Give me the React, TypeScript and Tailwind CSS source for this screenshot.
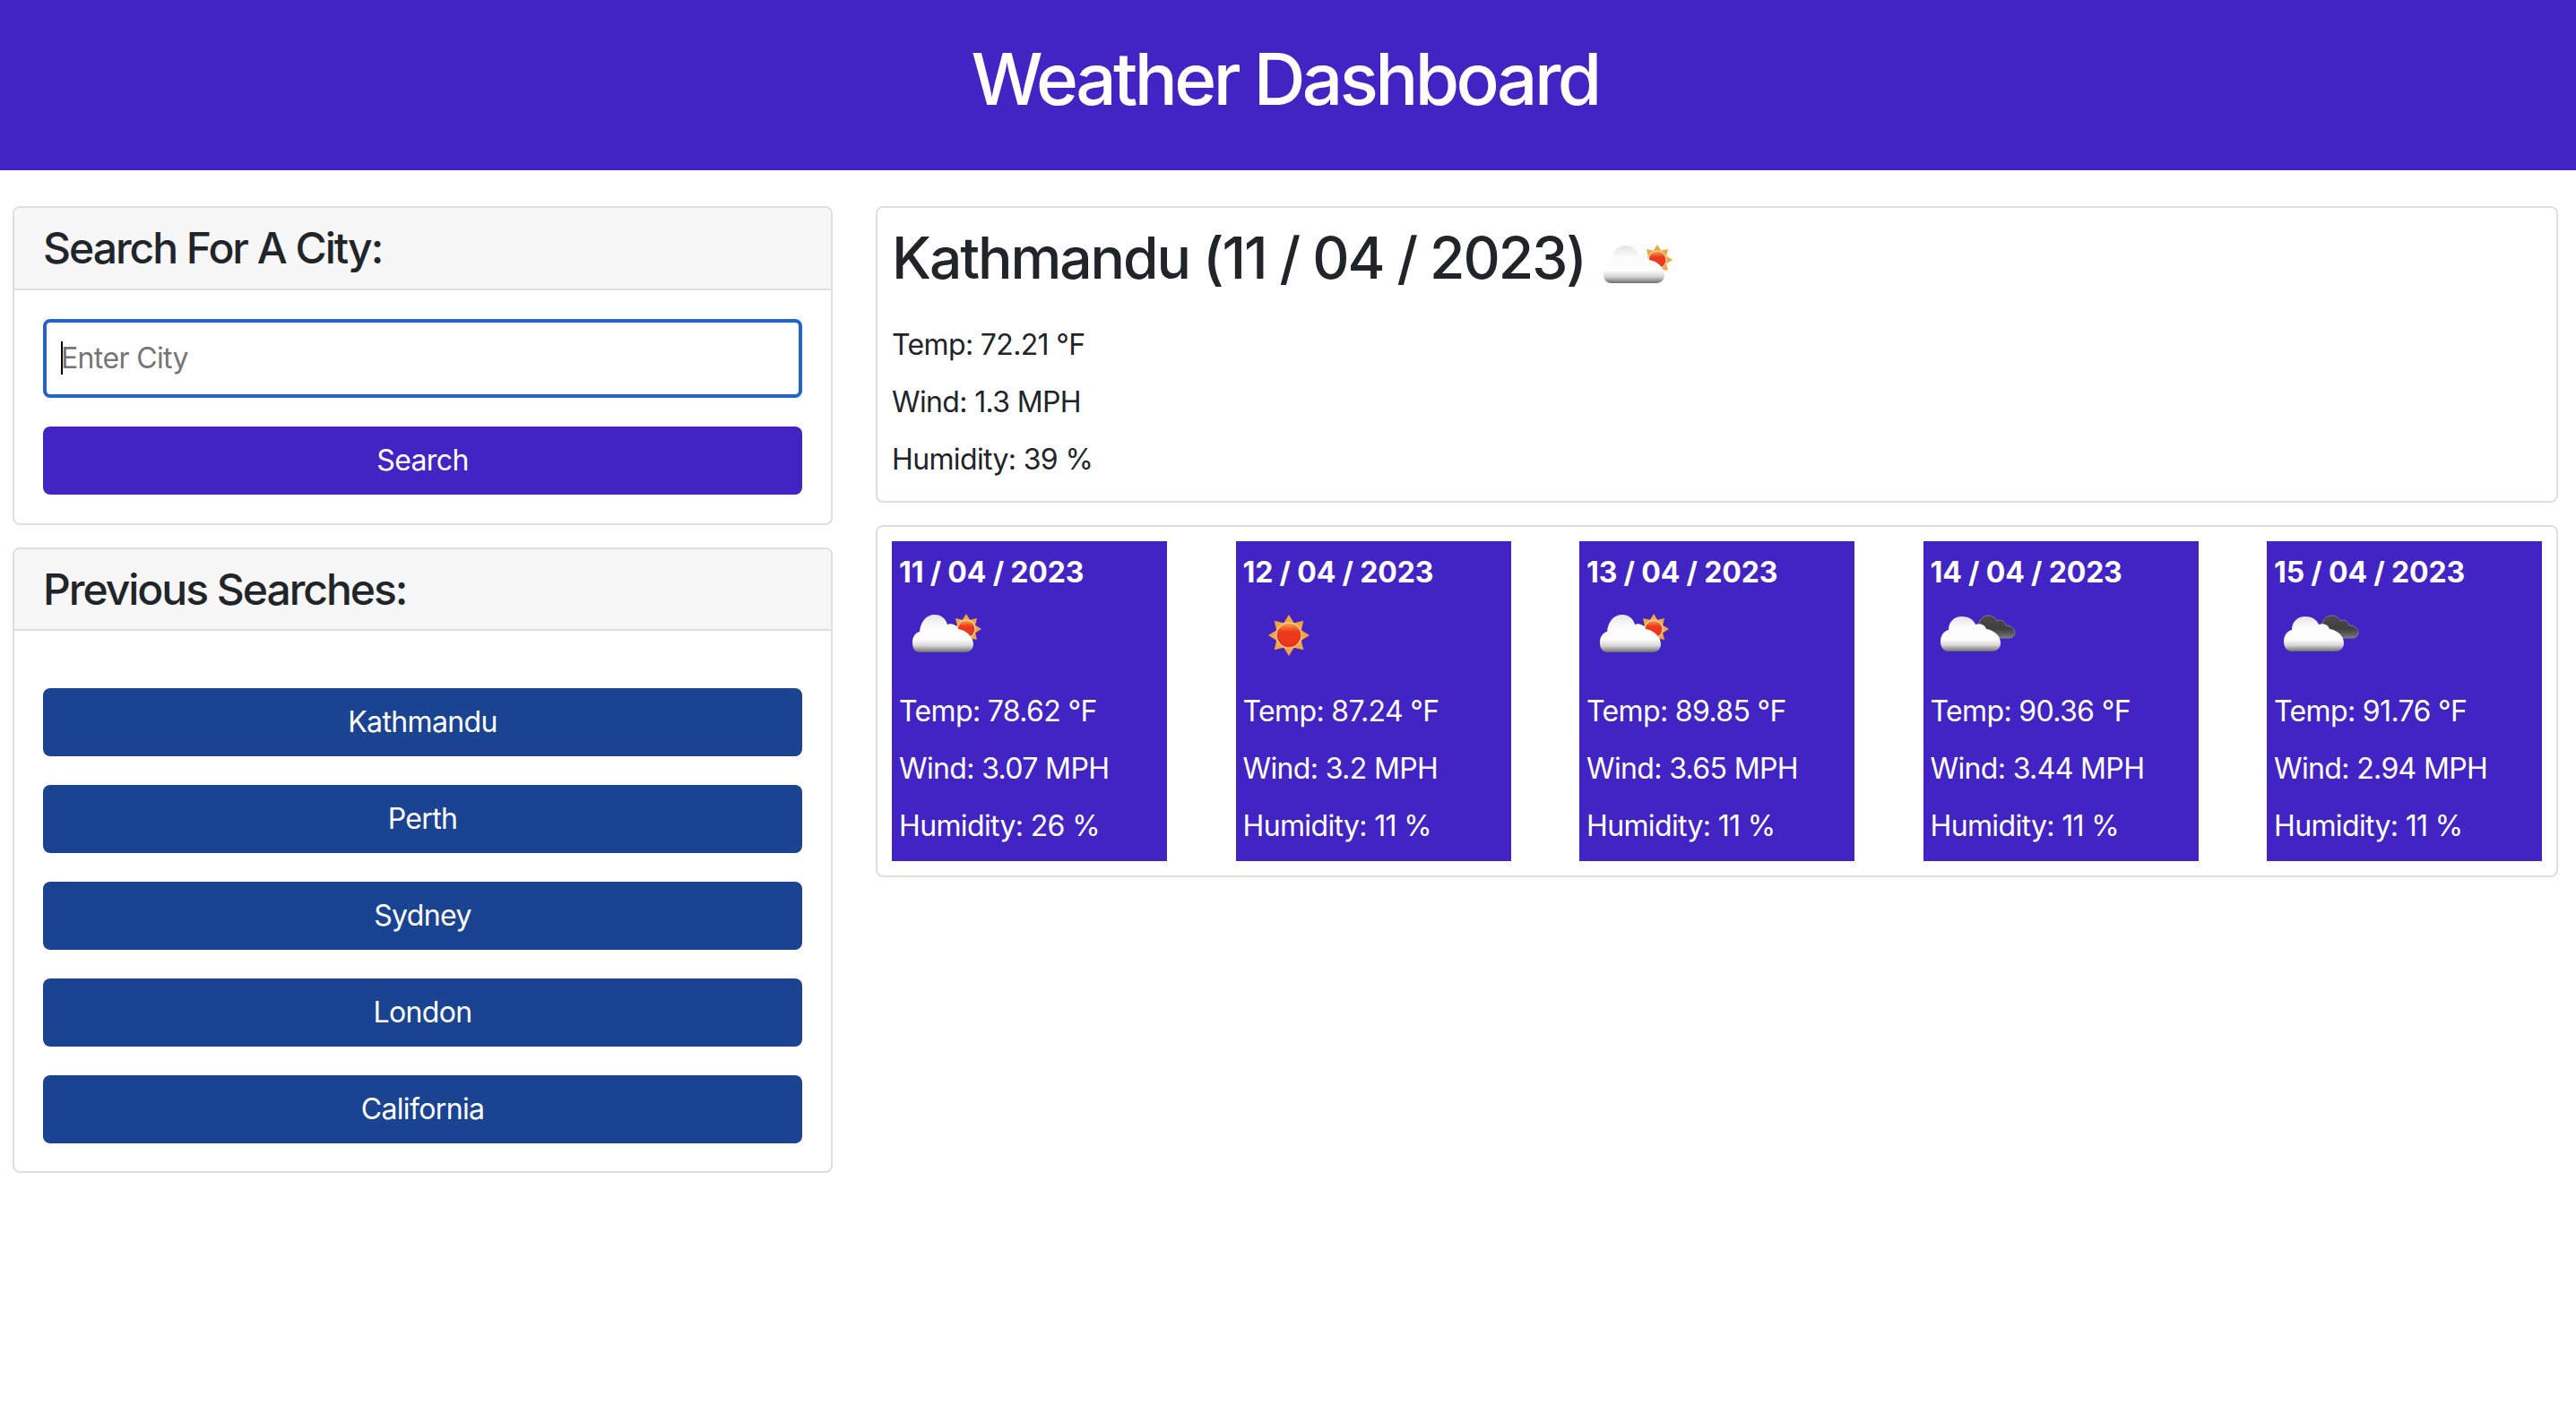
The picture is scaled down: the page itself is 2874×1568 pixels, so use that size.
import React from 'react';

type IconKind = 'few-clouds' | 'clear' | 'broken-clouds';

interface Forecast {
  date: string;
  icon: IconKind;
  temp: string;
  wind: string;
  humidity: string;
}

const forecasts: Forecast[] = [
  { date: '11 / 04 / 2023', icon: 'few-clouds', temp: '78.62', wind: '3.07', humidity: '26' },
  { date: '12 / 04 / 2023', icon: 'clear', temp: '87.24', wind: '3.2', humidity: '11' },
  { date: '13 / 04 / 2023', icon: 'few-clouds', temp: '89.85', wind: '3.65', humidity: '11' },
  { date: '14 / 04 / 2023', icon: 'broken-clouds', temp: '90.36', wind: '3.44', humidity: '11' },
  { date: '15 / 04 / 2023', icon: 'broken-clouds', temp: '91.76', wind: '2.94', humidity: '11' },
];

const cities = ['Kathmandu', 'Perth', 'Sydney', 'London', 'California'];

const Defs = () => (
  <defs>
    <linearGradient id="cloudFill" x1="0" y1="0" x2="0" y2="1">
      <stop offset="0" stopColor="#e4e4e4" />
      <stop offset="0.3" stopColor="#fbfbfb" />
      <stop offset="0.65" stopColor="#ffffff" />
      <stop offset="0.82" stopColor="#d8d8d8" />
      <stop offset="1" stopColor="#6e6e6e" />
    </linearGradient>
    <linearGradient id="darkFill" x1="0" y1="0" x2="0" y2="1">
      <stop offset="0" stopColor="#4a4a4a" />
      <stop offset="0.6" stopColor="#3f3f3f" />
      <stop offset="1" stopColor="#777777" />
    </linearGradient>
    <linearGradient id="sunFill" x1="0" y1="0" x2="0" y2="1">
      <stop offset="0" stopColor="#f6b04a" />
      <stop offset="0.35" stopColor="#ee3a1f" />
      <stop offset="1" stopColor="#e8351f" />
    </linearGradient>
    <filter id="soft" x="-10%" y="-10%" width="120%" height="120%">
      <feGaussianBlur stdDeviation="0.55" />
    </filter>
  </defs>
);

const SunShape = ({ cx, cy, rays, disc }: { cx: number; cy: number; rays: number; disc: number }) => {
  const points: string[] = [];
  for (let i = 0; i < 16; i++) {
    const r = i % 2 === 0 ? rays : disc + 1;
    const a = (i * Math.PI) / 8 - Math.PI / 2;
    points.push(`${cx + r * Math.cos(a)},${cy + r * Math.sin(a)}`);
  }
  return (
    <g>
      <polygon points={points.join(' ')} fill="#f5a53c" />
      <circle cx={cx} cy={cy} r={disc} fill="url(#sunFill)" stroke="#f8d9b0" strokeWidth="1.2" />
    </g>
  );
};

const CLOUD =
  'M20 67 C14 67 11 62 11 56 C11 49 15 44 20 43 C20 34 26 28 35 28 C43 28 48 32 50 37 C56 35 61 38 62 42 C70 43 78 49 78 58 C78 63 74 67 68 67 Z';

const WeatherIcon = ({ kind }: { kind: IconKind }) => (
  <svg viewBox="0 0 100 100" className="h-[100px] w-[100px] shrink-0">
    <Defs />
    {kind === 'clear' && (
      <g filter="url(#soft)">
        <SunShape cx={51} cy={49} rays={23} disc={14} />
      </g>
    )}
    {kind === 'few-clouds' && (
      <g filter="url(#soft)">
        <SunShape cx={75} cy={42} rays={17} disc={10} />
        <path
          d="M24 68 C17 68 15 63 15 57 C15 51 18 46 23 45 C24 34 30 26 40 26 C47 26 52 30 54 37 C58 35 64 37 66 42 C74 43 83 50 83 59 C83 64 79 68 74 68 Z"
          fill="url(#cloudFill)"
        />
      </g>
    )}
    {kind === 'broken-clouds' && (
      <g filter="url(#soft)">
        <path
          d="M58 52 C53 50 52 44 53 38 C54 31 60 26 66 27 C71 28 73 31 74 33 C78 31 83 33 84 38 C90 38 94 42 94 46 C94 50 91 52 87 52 Z"
          fill="url(#darkFill)"
          stroke="#8a8a8a"
          strokeWidth="0.8"
        />
        <path d={CLOUD} fill="url(#cloudFill)" />
      </g>
    )}
  </svg>
);

const Card = ({ title, children }: { title: string; children: React.ReactNode }) => (
  <section className="rounded-lg border-2 border-[#dfdfdf] bg-white">
    <div className="rounded-t-lg border-b-2 border-[#dfdfdf] bg-[#f7f7f7] px-8 py-4">
      <h4 className="text-[48px] font-[550] leading-[1.2] tracking-[-0.042em] text-[#212529]">{title}</h4>
    </div>
    {children}
  </section>
);

export default function App() {
  return (
    <div className="min-h-[1568px] bg-white font-['Inter',sans-serif] text-[32px] leading-[48px] tracking-[-0.02em] text-[#212529]">
      <header className="flex h-[190px] items-center justify-center bg-[#4224c4] pb-[14px] pr-[7px]">
        <h1 className="text-[80px] font-[550] leading-[1.2] tracking-[-0.045em] text-white">Weather Dashboard</h1>
      </header>

      <div className="flex gap-[48px] pl-[14px] pr-[20px] pt-[40px]">
        {/* Left column: search and history */}
        <aside className="flex w-[915px] shrink-0 flex-col gap-[25px]">
          <Card title="Search For A City:">
            <div className="flex flex-col gap-8 p-8">
              <div className="relative">
                <input
                  type="text"
                  placeholder="Enter City"
                  className="h-[88px] w-full rounded-lg border-4 border-[#2264c8] bg-white px-[16px] text-[32px] outline-none placeholder:text-[#757575]"
                />
                <span className="absolute left-[20px] top-[25px] h-[37px] w-[2px] bg-black" />
              </div>
              <button className="h-[76px] w-full rounded-lg bg-[#4224c4] text-white">Search</button>
            </div>
          </Card>

          <Card title="Previous Searches:">
            <div className="flex flex-col gap-8 px-8 pb-[31px] pt-16">
              {cities.map((city) => (
                <button key={city} className="h-[76px] w-full rounded-lg bg-[#1a4491] text-white">
                  {city}
                </button>
              ))}
            </div>
          </Card>
        </aside>

        {/* Right column: current weather and forecast */}
        <main className="flex min-w-0 flex-1 flex-col gap-[25px]">
          <section className="rounded-lg border-2 border-[#dfdfdf] px-4 pb-[6px] pt-4">
            <div className="flex h-[113px] items-start">
              <h2 className="mt-[2px] text-[64px] font-[550] leading-[1.2] tracking-[-0.032em]">
                Kathmandu (11 / 04 / 2023)
              </h2>
              <div className="ml-[5px]">
                <WeatherIcon kind="few-clouds" />
              </div>
            </div>
            <p className="mb-4">Temp: 72.21 °F</p>
            <p className="mb-4">Wind: 1.3 MPH</p>
            <p className="mb-4">Humidity: 39 %</p>
          </section>

          <section className="flex justify-between rounded-lg border-2 border-[#dfdfdf] p-4">
            {forecasts.map((day) => (
              <article key={day.date} className="w-[307px] bg-[#4224c4] px-2 pt-4 text-white">
                <h6 className="text-[32px] font-bold leading-[1.2] tracking-[-0.005em]">{day.date}</h6>
                <div className="h-[112px] pt-[2px]">
                  <WeatherIcon kind={day.icon} />
                </div>
                <p className="mb-4">Temp: {day.temp} °F</p>
                <p className="mb-4">Wind: {day.wind} MPH</p>
                <p className="mb-[15px]">Humidity: {day.humidity} %</p>
              </article>
            ))}
          </section>
        </main>
      </div>
    </div>
  );
}
